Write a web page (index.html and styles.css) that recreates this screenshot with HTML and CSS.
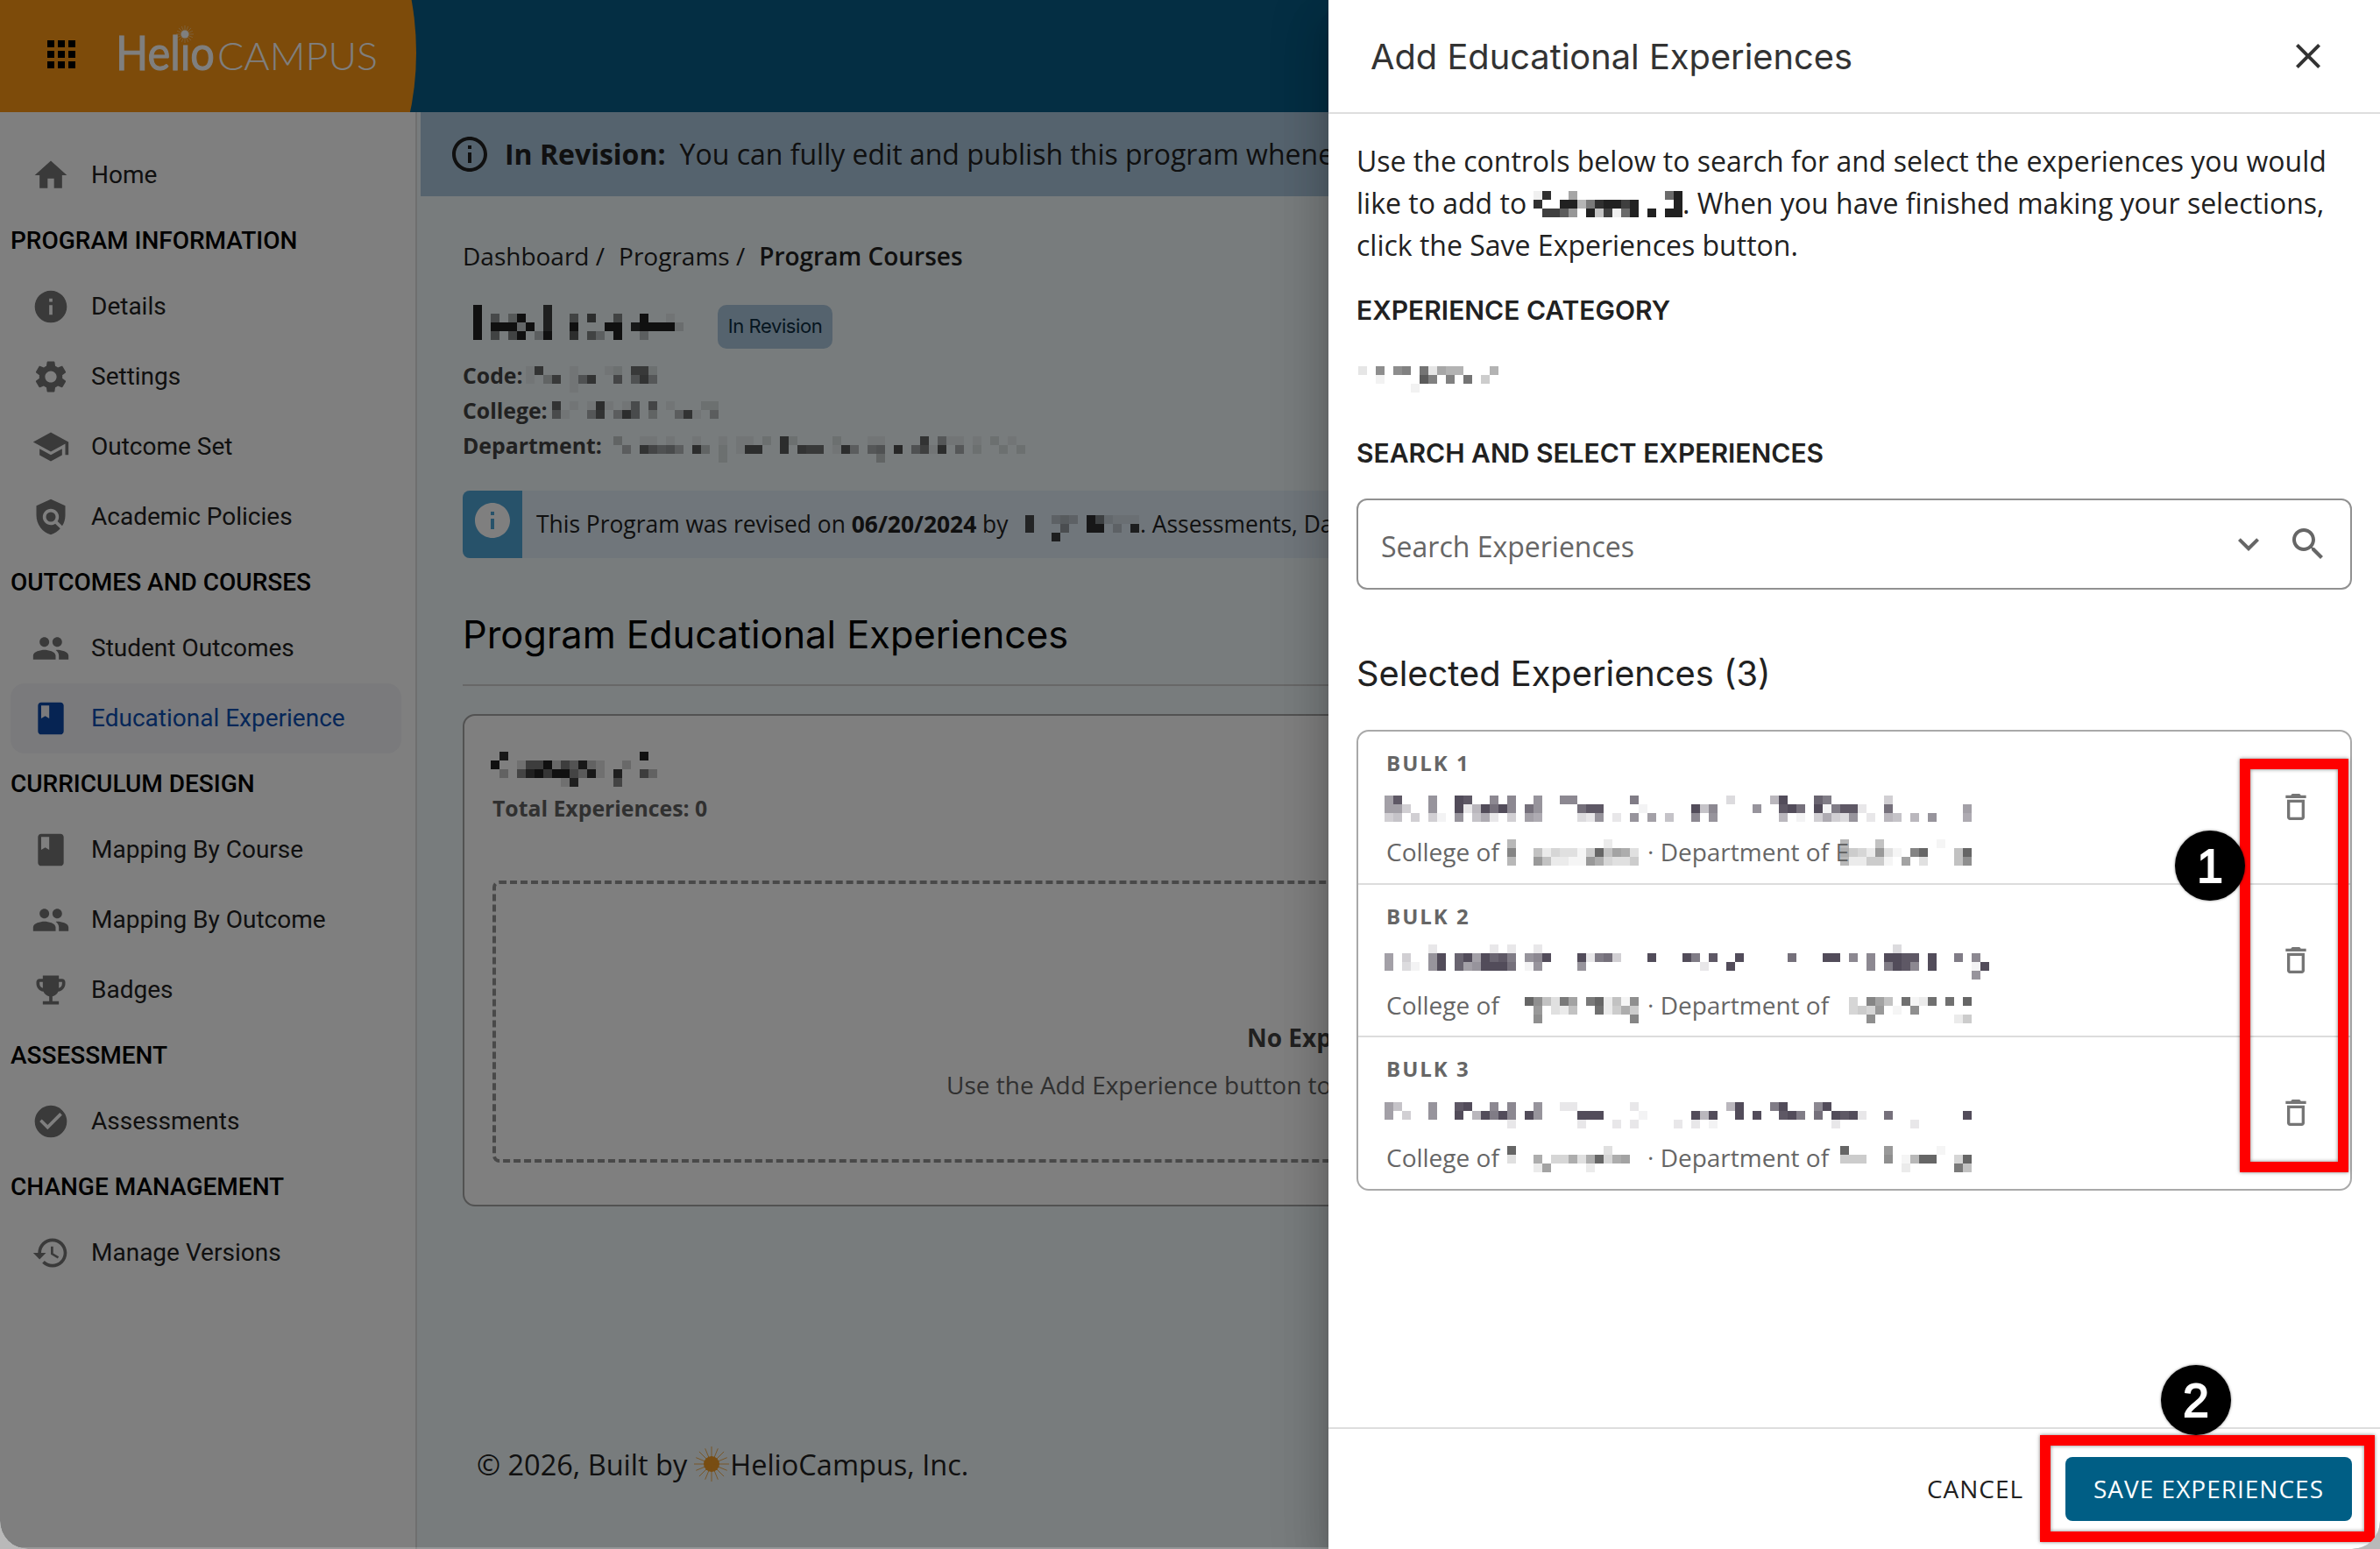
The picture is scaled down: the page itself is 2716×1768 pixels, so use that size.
FILE: index.html
```html
<!DOCTYPE html>
<html lang="en">
<head>
    <meta charset="utf-8">
    <title>HelioCampus - Program Educational Experiences</title>
    <link rel="stylesheet" href="styles.css">
</head>
<body>
    <!-- icon set -->
    <svg class="icon-defs" width="0" height="0">
        <symbol id="i-apps" viewBox="0 0 24 24"><path d="M4 8h4V4H4zm6 12h4v-4h-4zm-6 0h4v-4H4zm0-6h4v-4H4zm6 0h4v-4h-4zm6-10v4h4V4zm-6 4h4V4h-4zm6 6h4v-4h-4zm0 6h4v-4h-4z"/></symbol>
        <symbol id="i-home" viewBox="0 0 24 24"><path d="M10 20v-6h4v6h5v-8h3L12 3 2 12h3v8z"/></symbol>
        <symbol id="i-info" viewBox="0 0 24 24"><path d="M12 2C6.48 2 2 6.48 2 12s4.48 10 10 10 10-4.48 10-10S17.52 2 12 2m1 15h-2v-6h2zm0-8h-2V7h2z"/></symbol>
        <symbol id="i-info-outline" viewBox="0 0 24 24"><path d="M11 7h2v2h-2zm0 4h2v6h-2zm1-9C6.48 2 2 6.48 2 12s4.48 10 10 10 10-4.48 10-10S17.52 2 12 2m0 18c-4.41 0-8-3.59-8-8s3.59-8 8-8 8 3.59 8 8-3.59 8-8 8"/></symbol>
        <symbol id="i-settings" viewBox="0 0 24 24"><path d="M19.14 12.94c.04-.3.06-.61.06-.94 0-.32-.02-.64-.07-.94l2.03-1.58c.18-.14.23-.41.12-.61l-1.92-3.32c-.12-.22-.37-.29-.59-.22l-2.39.96c-.5-.38-1.03-.7-1.62-.94l-.36-2.54c-.04-.24-.24-.41-.48-.41h-3.84c-.24 0-.43.17-.47.41l-.36 2.54c-.59.24-1.13.57-1.62.94l-2.39-.96c-.22-.08-.47 0-.59.22L2.74 8.87c-.12.21-.08.47.12.61l2.03 1.58c-.05.3-.09.63-.09.94s.02.64.07.94l-2.03 1.58c-.18.14-.23.41-.12.61l1.92 3.32c.12.22.37.29.59.22l2.39-.96c.5.38 1.03.7 1.62.94l.36 2.54c.05.24.24.41.48.41h3.84c.24 0 .44-.17.47-.41l.36-2.54c.59-.24 1.13-.56 1.62-.94l2.39.96c.22.08.47 0 .59-.22l1.92-3.32c.12-.22.07-.47-.12-.61zM12 15.6c-1.98 0-3.6-1.62-3.6-3.6s1.62-3.6 3.6-3.6 3.6 1.62 3.6 3.6-1.62 3.6-3.6 3.6"/></symbol>
        <symbol id="i-school" viewBox="0 0 24 24"><path d="M5 13.18v4L12 21l7-3.82v-4L12 17zM12 3 1 9l11 6 9-4.91V17h2V9z"/></symbol>
        <symbol id="i-policy" viewBox="0 0 24 24"><path d="M21 5l-9-4-9 4v6c0 5.55 3.84 10.74 9 12 2.3-.56 4.33-1.9 5.88-3.71l-3.12-3.12c-1.94 1.29-4.58 1.07-6.29-.64-1.95-1.95-1.95-5.12 0-7.07s5.12-1.95 7.07 0c1.71 1.71 1.92 4.35.64 6.29l2.9 2.9C20.29 15.69 21 13.38 21 11z"/><circle cx="12" cy="12" r="3"/></symbol>
        <symbol id="i-people" viewBox="0 0 24 24"><path d="M16 11c1.66 0 2.99-1.34 2.99-3S17.66 5 16 5s-3 1.34-3 3 1.34 3 3 3m-8 0c1.66 0 2.99-1.34 2.99-3S9.66 5 8 5 5 6.34 5 8s1.34 3 3 3m0 2c-2.33 0-7 1.17-7 3.5V19h14v-2.5c0-2.33-4.67-3.5-7-3.5m8 0c-.29 0-.62.02-.97.05 1.16.84 1.97 1.97 1.97 3.45V19h6v-2.5c0-2.33-4.67-3.5-7-3.5"/></symbol>
        <symbol id="i-book" viewBox="0 0 24 24"><path fill-rule="evenodd" d="M18 2H6c-1.1 0-2 .9-2 2v16c0 1.1.9 2 2 2h12c1.1 0 2-.9 2-2V4c0-1.1-.9-2-2-2M6 4h5v8l-2.5-1.5L6 12z"/></symbol>
        <symbol id="i-trophy" viewBox="0 0 24 24"><path fill-rule="evenodd" d="M17 3H7v2H5C3.9 5 3 5.9 3 7v1c0 2.55 1.92 4.63 4.39 4.94.63 1.5 1.98 2.63 3.61 2.96V19H7v2h10v-2h-4v-3.1c1.63-.33 2.98-1.46 3.61-2.96C19.08 12.63 21 10.55 21 8V7c0-1.1-.9-2-2-2h-2zM5 8V7h2v3.82C5.84 10.4 5 9.3 5 8m14 0c0 1.3-.84 2.4-2 2.82V7h2z"/></symbol>
        <symbol id="i-check" viewBox="0 0 24 24"><path d="M12 2C6.48 2 2 6.48 2 12s4.48 10 10 10 10-4.48 10-10S17.52 2 12 2m-2 15-5-5 1.41-1.41L10 14.17l7.59-7.59L19 8z"/></symbol>
        <symbol id="i-history" viewBox="0 0 24 24"><path d="M13 3c-4.97 0-9 4.03-9 9H1l3.89 3.89.07.14L9 12H6c0-3.87 3.13-7 7-7s7 3.13 7 7-3.13 7-7 7c-1.93 0-3.68-.79-4.94-2.06l-1.42 1.42C8.27 19.99 10.51 21 13 21c4.97 0 9-4.03 9-9s-4.03-9-9-9m-1 5v5l4.28 2.54.72-1.21-3.5-2.08V8z"/></symbol>
        <symbol id="i-close" viewBox="0 0 24 24"><path d="M19 6.41 17.59 5 12 10.59 6.41 5 5 6.41 10.59 12 5 17.59 6.41 19 12 13.41 17.59 19 19 17.59 13.41 12z"/></symbol>
        <symbol id="i-down" viewBox="0 0 24 24"><path d="M7.41 8.59 12 13.17l4.59-4.58L18 10l-6 6-6-6z"/></symbol>
        <symbol id="i-search" viewBox="0 0 24 24"><path d="M15.5 14h-.79l-.28-.27C15.41 12.59 16 11.11 16 9.5 16 5.91 13.09 3 9.5 3S3 5.91 3 9.5 5.91 16 9.5 16c1.61 0 3.09-.59 4.23-1.57l.27.28v.79l5 4.99L20.49 19zm-6 0C7.01 14 5 11.99 5 9.5S7.01 5 9.5 5 14 7.01 14 9.5 11.99 14 9.5 14"/></symbol>
        <symbol id="i-delete" viewBox="0 0 24 24"><path d="M6 19c0 1.1.9 2 2 2h8c1.1 0 2-.9 2-2V7H6zM8 9h8v10H8zm7.5-5-1-1h-5l-1 1H5v2h14V4z"/></symbol>
        <symbol id="i-sun" viewBox="0 0 40 40">
            <circle cx="20" cy="20" r="9"/>
            <g stroke="currentColor" stroke-width=".8">
                <path d="M20 0v40M0 20h40M5.9 5.9l28.2 28.2M34.1 5.9 5.9 34.1"/>
                <path d="M12.7 2.3l14.6 35.4M27.3 2.3 12.7 37.7M2.3 12.7l35.4 14.6M2.3 27.3l35.4-14.6"/>
            </g>
        </symbol>
    </svg>

    <div class="app">
        <header class="topbar">
            <div class="brand">
                <svg class="apps"><use href="#i-apps"/></svg>
                <svg class="logo" viewBox="0 0 320 80">
                    <text class="logo-helio" x="6" y="61" textLength="113" lengthAdjust="spacingAndGlyphs">Helıo</text>
                    <text class="logo-campus" x="122" y="61" textLength="183" lengthAdjust="spacingAndGlyphs">CAMPUS</text>
                    <use href="#i-sun" x="75" y="10" width="20" height="20"/>
                </svg>
            </div>
        </header>

        <div class="layout">
            <nav class="sidebar">
                <a class="nav-item"><svg><use href="#i-home"/></svg>Home</a>
                <div class="nav-title">PROGRAM INFORMATION</div>
                <a class="nav-item"><svg><use href="#i-info"/></svg>Details</a>
                <a class="nav-item"><svg><use href="#i-settings"/></svg>Settings</a>
                <a class="nav-item"><svg><use href="#i-school"/></svg>Outcome Set</a>
                <a class="nav-item"><svg><use href="#i-policy"/></svg>Academic Policies</a>
                <div class="nav-title">OUTCOMES AND COURSES</div>
                <a class="nav-item"><svg><use href="#i-people"/></svg>Student Outcomes</a>
                <a class="nav-item active"><svg><use href="#i-book"/></svg>Educational Experience</a>
                <div class="nav-title">CURRICULUM DESIGN</div>
                <a class="nav-item"><svg><use href="#i-book"/></svg>Mapping By Course</a>
                <a class="nav-item"><svg><use href="#i-people"/></svg>Mapping By Outcome</a>
                <a class="nav-item"><svg><use href="#i-trophy"/></svg>Badges</a>
                <div class="nav-title">ASSESSMENT</div>
                <a class="nav-item"><svg><use href="#i-check"/></svg>Assessments</a>
                <div class="nav-title">CHANGE MANAGEMENT</div>
                <a class="nav-item"><svg><use href="#i-history"/></svg>Manage Versions</a>
            </nav>

            <main class="main">
                <div class="banner">
                    <svg><use href="#i-info-outline"/></svg>
                    <b>In Revision:</b>
                    <span>You can fully edit and publish this program whenever</span>
                </div>
                <div class="content">
                    <div class="breadcrumb">
                        <span>Dashboard /</span><span>Programs /</span><b>Program Courses</b>
                    </div>
                    <div class="title-row">
                        <svg class="mosaic" data-cells="f0000000d000000000000000 f0705f00d0080b00800f0010 f0fff3f0d00f000ff0effff2 f0808f04f00b0840f0040000"></svg>
                        <span class="chip">In Revision</span>
                    </div>
                    <div class="meta"><b class="w-code">Code:</b><svg class="mosaic" data-cells="1c0001000120bb2 104b017c00907c6 000001000000000"></svg></div>
                    <div class="meta"><b class="w-college">College:</b><svg class="mosaic" data-cells="c0101d1018090100022 81006c05d804005c105"></svg></div>
                    <div class="meta"><b class="w-dept">Department:</b><svg class="mosaic" data-cells="04001101001001011020d200002000110000c06110102010 0050c97850d40201dd00d0cbb01d50670e07a1d060200202 000000000000020000000000000000040000000000000000"></svg></div>

                    <div class="alert">
                        <div class="alert-icon"><svg><use href="#i-info"/></svg></div>
                        <div class="alert-text">This Program was revised on <b>06/20/2024</b> by</div>
                        <svg class="mosaic" data-cells="c003430e82111 c000600ee030d 000d000000000"></svg>
                        <div class="alert-rest">. Assessments, Data</div>
                    </div>

                    <h2>Program Educational Experiences</h2>

                    <div class="card">
                        <svg class="mosaic" data-cells="0e000000000000000f0 f00299f396e42003000 0408dfaff85e20d0094 000000002d000080000"></svg>
                        <div class="total">Total Experiences: 0</div>
                        <div class="empty">
                            <b>No Experiences</b>
                            <span>Use the Add Experience button to</span>
                        </div>
                    </div>
                    <footer class="copyright">
                        <span class="built">© 2026, Built by</span>
                        <svg><use href="#i-sun"/></svg>
                        <span class="company">HelioCampus, Inc.</span>
                    </footer>
                </div>
            </main>
        </div>

        <div class="backdrop"></div>

        <aside class="drawer">
            <div class="drawer-header">
                <span class="drawer-title">Add Educational Experiences</span>
                <svg><use href="#i-close"/></svg>
            </div>
            <div class="drawer-body">
                <p class="intro">
                    <span class="line">Use the controls below to search for and select the experiences you would</span>
                    <span class="line"><span class="intro-start">like to add to</span><svg class="mosaic" data-cells="1e0060000000000af e00ff59effdf0000f 0ddb70f4d1af0f0ff"></svg><span>. When you have finished making your selections,</span></span>
                    <span class="line">click the Save Experiences button.</span>
                </p>
                <h4 class="h-category">EXPERIENCE CATEGORY</h4>
                <svg class="mosaic category" data-cells="20909a0b27660006 0010000da0a0b040 0000001000000000"></svg>
                <h4 class="h-search">SEARCH AND SELECT EXPERIENCES</h4>
                <div class="search">
                    <span>Search Experiences</span>
                    <svg class="down"><use href="#i-down"/></svg>
                    <svg><use href="#i-search"/></svg>
                </div>
                <h3>Selected Experiences (3)</h3>
                <div class="list">
                    <div class="row row-1">
                        <div class="row-label">BULK 1</div>
                        <div class="row-title"><svg class="mosaic" data-cells="8e000900fe00a0a00900aa000000b0000000000300006f000db0000004000000000 88400900f26fcfa0c90000cee0000100000f5a0000900efc0f1bee200c000000008 45040410905720408700003290209080500a0900000006010474390206506090007"></svg></div>
                        <div class="row-org">
                            <span class="org-college">College of</span><svg class="mosaic m-college" data-cells="700000000002000 c006243315f6983 700a62211a84335"></svg>
                            <span class="org-dept">· Department of E</span><svg class="mosaic m-dept" data-cells="700060000001000 8542a310cf0006f 72255109030006b"></svg>
                        </div>
                        <svg class="trash"><use href="#i-delete"/></svg>
                    </div>
                    <div class="row row-2">
                        <div class="row-label">BULK 2</div>
                        <div class="row-title"><svg class="mosaic" data-cells="000002000000202002000000000000000000000000000000000000000030000000000 804009f0df8fdeb09af000f2bc4000f000fb0e00f00000c000ff0a0a0ffee0f00b0a0 803109f0d89fffc019000090000000000000200f000000000000000a0bfea0f00001f 000000000000000000000000000000000000000000000000000000000000000000090"></svg></div>
                        <div class="row-org">
                            <span class="org-college">College of</span><svg class="mosaic m-college" data-cells="00fb63d90df261b 000a032600e2585 000b0000000000c"></svg>
                            <span class="org-dept">· Department of</span><svg class="mosaic m-dept" data-cells="040c960e12e0e0f 0454a010b000000 000b00000000025"></svg>
                        </div>
                        <svg class="trash"><use href="#i-delete"/></svg>
                    </div>
                    <div class="row row-3">
                        <div class="row-label">BULK 3</div>
                        <div class="row-title"><svg class="mosaic" data-cells="85000900ef00a0a0090022000000200000000006f000bf000af0000000000000000 80400900f06fbfa0f90000fff0000100000f6f00f0f00efb0c0fef200c00000000f 0000000000000020000000200020200002020100000000000002000000002000000"></svg></div>
                        <div class="row-org">
                            <span class="org-college">College of</span><svg class="mosaic m-college" data-cells="f00000000003000 3008044838f4890 000290000200000"></svg>
                            <span class="org-dept">· Department of</span><svg class="mosaic m-dept" data-cells="f0000a000001000 55500b017ff004f 0000000200000d6"></svg>
                        </div>
                        <svg class="trash"><use href="#i-delete"/></svg>
                    </div>
                </div>
            </div>
            <div class="drawer-footer">
                <button class="cancel">CANCEL</button>
                <button class="save">SAVE EXPERIENCES</button>
            </div>
        </aside>

        <!-- step callouts -->
        <div class="callout callout-1"></div>
        <div class="callout callout-2"></div>
        <div class="step step-1">1</div>
        <div class="step step-2">2</div>
    </div>
    <script src="script.js"></script>
</body>
</html>
```
FILE: styles.css
```css
* {
    box-sizing: border-box;
}
body {
    margin: 0;
    background: #b9b9b9;
    font-family: "Open Sans", "Noto Sans", sans-serif;
    font-size: 28px;
    color: #212121;
}
svg {
    display: block;
    flex: none;
    fill: currentColor;
}
b {
    font-weight: 700;
}
.icon-defs {
    position: absolute;
}
.app {
    position: relative;
    width: 2716px;
    height: 1768px;
    overflow: hidden;
    border-radius: 0 0 32px 32px;
    background: #f0f8fa;
}

/* top bar */
.topbar {
    height: 128px;
    background: #085c86;
}
.brand {
    display: flex;
    width: 480px;
    height: 128px;
    padding-left: 46px;
    background: #fa9614;
    clip-path: ellipse(475px 400px at 0 60px);
}
.apps {
    width: 48px;
    height: 48px;
    margin-top: 38px;
    color: #000;
}
.logo {
    width: 320px;
    height: 80px;
    margin: 19px 0 0 32px;
    color: #fff;
}
.logo-helio {
    font-family: Lato, sans-serif;
    font-size: 54px;
    stroke: #fff;
    stroke-width: 1px;
}
.logo-campus {
    font-family: Lato, sans-serif;
    font-size: 43px;
    font-weight: 300;
}

/* sidebar */
.layout {
    display: flex;
    height: 1640px;
}
.sidebar {
    flex: none;
    width: 476px;
    padding: 32px 16px 0 12px;
    background: #fff;
    border-right: 2px solid #dedede;
    font-family: Roboto, sans-serif;
}
.nav-item {
    display: flex;
    align-items: center;
    gap: 24px;
    height: 80px;
    padding: 0 0 1px 24px;
    border-radius: 16px;
}
.nav-item svg {
    width: 44px;
    height: 44px;
    color: #757575;
}
.nav-item.active {
    background: #f4f4f8;
    color: #0c4eb0;
}
.nav-item.active svg {
    color: #0c48a6;
}
.nav-title {
    height: 70px;
    line-height: 70px;
    font-weight: 500;
    color: #000;
}

/* main */
.main {
    flex: 1;
    min-width: 0;
    padding-left: 4px;
}
.banner {
    display: flex;
    align-items: center;
    height: 96px;
    padding: 0 0 1px 32px;
    background: #aac6dc;
    font-size: 32px;
    white-space: nowrap;
}
.banner svg {
    width: 48px;
    height: 48px;
    margin-right: 16px;
}
.banner b {
    margin-right: 16px;
}
.content {
    padding: 43px 48px 0;
}
.breadcrumb {
    display: flex;
    gap: 16px;
    height: 50px;
    line-height: 50px;
}
.breadcrumb b {
    font-weight: 600;
}
.title-row {
    display: flex;
    height: 50px;
    margin: 31px 0 10px;
    padding-left: 12px;
}
.chip {
    width: 131px;
    height: 50px;
    margin-left: 39px;
    border-radius: 10px;
    background: #aac6dc;
    color: #0c2c40;
    font-family: Inter, sans-serif;
    font-size: 22px;
    line-height: 49px;
    text-align: center;
    letter-spacing: -0.4px;
}
.meta {
    display: flex;
    height: 40px;
    line-height: 40px;
    font-size: 24.8px;
    color: #424242;
}
.meta .mosaic {
    margin-top: 10px;
}
.w-code {
    width: 72px;
}
.w-college {
    width: 102px;
}
.w-dept {
    width: 162px;
}
.alert {
    display: flex;
    height: 77px;
    margin-top: 32px;
    border-radius: 8px;
    background: #e1ecf6;
    line-height: 77px;
    font-size: 26.4px;
    overflow: hidden;
    white-space: nowrap;
}
.alert-icon {
    width: 68px;
    padding: 10px;
    background: #4ea4d4;
    color: #fff;
}
.alert-icon svg {
    width: 48px;
    height: 48px;
}
.alert-text {
    width: 558px;
    padding: 0 0 0 16px;
    margin-right: 16px;
}
.alert .mosaic {
    margin-top: 28px;
}
.alert-rest {
    margin-left: 1px;
}
h2 {
    height: 88px;
    margin: 58px 0 32px;
    border-bottom: 2px solid #cfcfcf;
    font-family: Inter, sans-serif;
    font-size: 43.4px;
    font-weight: 400;
    line-height: 59px;
    color: #000;
}
.card {
    height: 562px;
    padding: 41px 32px 0 30px;
    border: 2px solid #a4a4a4;
    border-radius: 14px;
    background: #fff;
}
.total {
    margin-top: 4px;
    padding-left: 2px;
    height: 40px;
    line-height: 40px;
    font-size: 24.8px;
    font-weight: 700;
    color: #616161;
}
.empty {
    display: flex;
    flex-direction: column;
    height: 322px;
    margin: 63px 0 0 2px;
    padding: 148px 0 0 514px;
    border: 4px dashed #929292;
    border-radius: 8px;
    line-height: 54px;
    white-space: nowrap;
    color: #616161;
}
.empty b {
    padding-left: 343px;
    color: #424242;
}
.copyright {
    display: flex;
    align-items: center;
    height: 48px;
    margin: 270px 0 0 16px;
    font-size: 32.5px;
}
.copyright svg {
    width: 40px;
    height: 40px;
    margin: 0 1px 0 8px;
    color: #f09a24;
}

.backdrop {
    position: absolute;
    inset: 0;
    background: rgba(0, 0, 0, 0.5);
    border-bottom: 2px solid rgba(255, 255, 255, 0.2);
}

/* drawer */
.drawer {
    position: absolute;
    top: 0;
    right: 0;
    display: flex;
    flex-direction: column;
    width: 1200px;
    height: 1768px;
    background: #fff;
    box-shadow: 0 16px 20px -10px rgba(0, 0, 0, 0.2), 0 32px 48px 4px rgba(0, 0, 0, 0.14), 0 12px 60px 10px rgba(0, 0, 0, 0.12);
}
.drawer-header {
    display: flex;
    align-items: center;
    justify-content: space-between;
    height: 130px;
    padding: 0 58px 0 48px;
    border-bottom: 2px solid #dedede;
    color: #333;
}
.drawer-header svg {
    width: 48px;
    height: 48px;
}
.drawer-title {
    font-family: Inter, sans-serif;
    font-size: 39.8px;
}
.drawer-body {
    flex: 1;
    padding: 30px 32px 0;
}
.intro {
    margin: 0;
    font-size: 32px;
    line-height: 48px;
}
.line {
    display: flex;
    height: 48px;
    white-space: nowrap;
}
.intro-start {
    width: 202px;
}
.intro .mosaic {
    margin-top: 10px;
}
h4 {
    margin: 0;
    font-family: Inter, sans-serif;
    font-size: 30px;
    font-weight: 600;
    line-height: 40px;
}
.h-category {
    margin-top: 30px;
}
.category {
    margin: 44px 0 0 2px;
    color: #424242;
}
.h-search {
    margin-top: 49px;
}
.search {
    display: flex;
    align-items: center;
    height: 104px;
    margin-top: 32px;
    padding: 0 24px 0 26px;
    border: 2px solid #919191;
    border-radius: 12px;
    font-size: 32px;
    color: #666;
}
.search span {
    flex: 1;
    padding-top: 4px;
}
.search svg {
    width: 48px;
    height: 48px;
}
.search .down {
    margin-right: 20px;
}
h3 {
    margin: 66px 0 34px;
    font-family: Inter, sans-serif;
    font-size: 39.8px;
    font-weight: 400;
    line-height: 60px;
}
.list {
    border: 2px solid #a9a9a9;
    border-radius: 14px;
}
.row {
    position: relative;
    height: 174px;
    padding: 16px 0 0 32px;
    border-bottom: 2px solid #dcdcdc;
    color: #666;
}
.row-1 {
    height: 175px;
}
.row-3 {
    height: 173px;
    border-bottom: 0;
}
.row-label {
    height: 40px;
    line-height: 40px;
    font-size: 24px;
    font-weight: 700;
    letter-spacing: 2px;
}
.row-title {
    height: 61px;
    margin-left: -2px;
    padding-top: 17px;
    color: #524c5a;
}
.row-2 .row-title {
    padding-top: 12px;
}
.row-3 .row-title {
    padding-top: 18px;
}
.row-org {
    display: flex;
    height: 40px;
    line-height: 40px;
    white-space: nowrap;
}
.org-college {
    width: 138px;
}
.org-dept {
    width: 220px;
    margin-left: 10px;
}
.m-college,
.m-dept {
    margin-top: 6px;
}
.row-2 .m-college,
.row-2 .m-dept {
    margin-top: 11px;
}
.row-3 .m-college,
.row-3 .m-dept {
    margin-top: 7px;
}
.trash {
    position: absolute;
    top: 66px;
    right: 42px;
    width: 40px;
    height: 40px;
    color: #757575;
}
.drawer-footer {
    display: flex;
    align-items: center;
    justify-content: flex-end;
    height: 139px;
    padding-right: 32px;
    border-top: 2px solid #dedede;
}
button {
    height: 73px;
    padding: 0;
    border: 0;
    border-radius: 8px;
    font-family: inherit;
    font-size: 28px;
    line-height: 73px;
    letter-spacing: 1px;
    white-space: nowrap;
}
.cancel {
    width: 174px;
    margin-right: 16px;
    background: none;
    color: #212121;
}
.save {
    width: 327px;
    background: #005e85;
    color: #fff;
}

/* numbered callouts over the page */
.callout {
    position: absolute;
    border: 12px solid #f00;
    box-shadow: 0 0 4px rgba(0, 0, 0, 0.5), inset 0 0 4px rgba(0, 0, 0, 0.5);
}
.callout-1 {
    left: 2556px;
    top: 866px;
    width: 124px;
    height: 472px;
}
.callout-2 {
    left: 2328px;
    top: 1638px;
    width: 382px;
    height: 122px;
}
.step {
    position: absolute;
    width: 80px;
    height: 80px;
    border-radius: 50%;
    background: #000;
    box-shadow: 0 0 3px rgba(0, 0, 0, 0.5);
    color: #fff;
    font-family: "Liberation Sans", Arial, sans-serif;
    font-size: 53px;
    line-height: 82px;
    text-align: center;
    -webkit-text-stroke: 2px #fff;
}
.step-1 {
    left: 2482px;
    top: 948px;
}
.step-2 {
    left: 2466px;
    top: 1558px;
}
```
FILE: script.js
```js
// Redacted values: each hex digit is one 10px cell, 0 = empty, f = solid
const CELL = 10;

document.querySelectorAll('.mosaic').forEach(svg => {
    const rows = svg.dataset.cells.split(' ');
    const cols = rows[0].length;
    svg.setAttribute('width', cols * CELL);
    svg.setAttribute('height', rows.length * CELL);
    svg.setAttribute('shape-rendering', 'crispEdges');
    rows.forEach((row, y) => {
        [...row].forEach((digit, x) => {
            if (digit === '0') return;
            const rect = document.createElementNS('http://www.w3.org/2000/svg', 'rect');
            rect.setAttribute('x', x * CELL);
            rect.setAttribute('y', y * CELL);
            rect.setAttribute('width', CELL);
            rect.setAttribute('height', CELL);
            rect.setAttribute('fill-opacity', parseInt(digit, 16) / 15);
            svg.appendChild(rect);
        });
    });
});
```
